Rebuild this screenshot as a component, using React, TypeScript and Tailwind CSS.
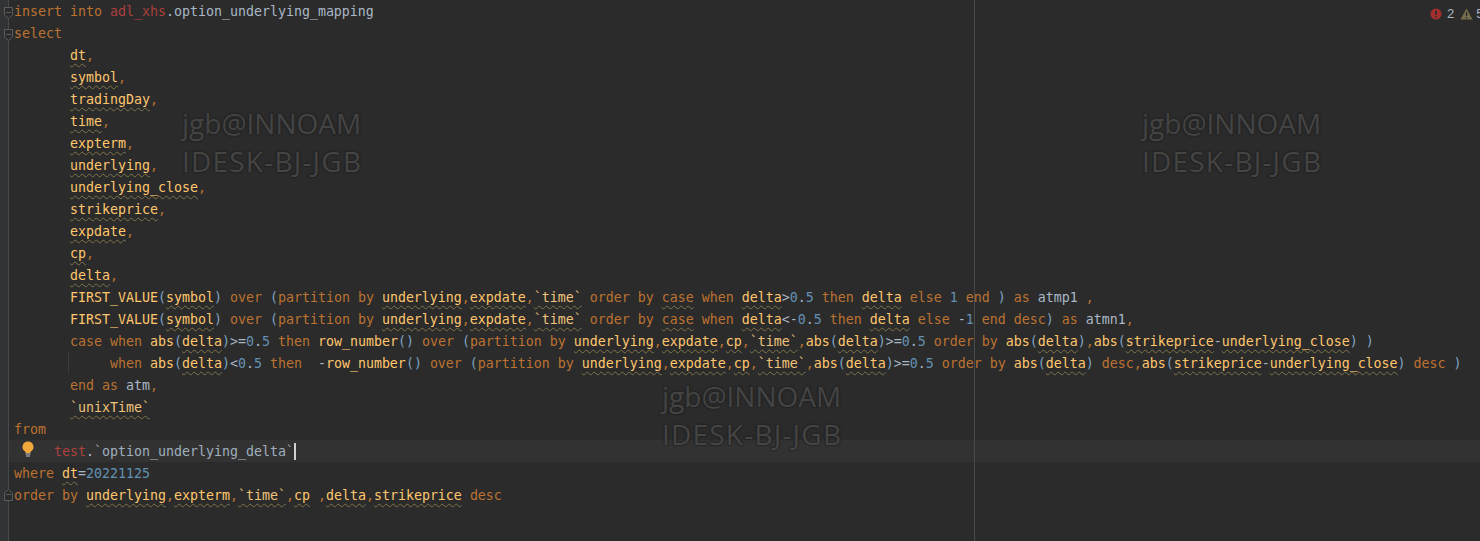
import React from 'react';

const keywords = new Set(['insert', 'into', 'select', 'over', 'partition', 'by', 'order', 'case', 'when', 'then', 'else', 'end', 'as', 'desc', 'from', 'where']);
const columns = new Set(['dt', 'symbol', 'tradingDay', 'time', 'expterm', 'underlying', 'underlying_close', 'strikeprice', 'expdate', 'cp', 'delta']);
const functions = new Set(['FIRST_VALUE', 'abs', 'row_number']);

const sourceLines = [
  'insert into adl_xhs.option_underlying_mapping',
  'select',
  '       dt,',
  '       symbol,',
  '       tradingDay,',
  '       time,',
  '       expterm,',
  '       underlying,',
  '       underlying_close,',
  '       strikeprice,',
  '       expdate,',
  '       cp,',
  '       delta,',
  '       FIRST_VALUE(symbol) over (partition by underlying,expdate,`time` order by ~case when delta>0.5 then delta else 1 end ) as atmp1 ,',
  '       FIRST_VALUE(symbol) over (partition by underlying,expdate,`time` order by ~case when delta<-0.5 then delta else -1 end desc) as atmn1,',
  '       case when abs(delta)>=0.5 then row_number() over (partition by underlying,expdate,cp,`time`,abs(delta)>=0.5 order by abs(delta),abs(strikeprice-underlying_close) )',
  '            when abs(delta)<0.5 then  -row_number() over (partition by underlying,expdate,cp,`time`,abs(delta)>=0.5 order by abs(delta) desc,abs(strikeprice-underlying_close) desc )',
  '       end as atm,',
  '       `unixTime`',
  'from',
  '     test.`option_underlying_delta`',
  'where dt=20221125',
  'order by underlying,expterm,`time`,cp ,delta,strikeprice desc',
];

const wavy = 'underline decoration-wavy decoration-[#7d7449] decoration-1 underline-offset-[3px]';

// small tokenizer, good enough for this one query
function Code({ text }: { text: string }) {
  const parts = text.match(/~case|`\w+`|\w+|\s+|./g) ?? [];
  return (
    <>
      {parts.map((part, i) => {
        if (part === '~case') return <span key={i} className={`text-[#bd7231] ${wavy}`}>case</span>;
        if (part === 'adl_xhs' || part === 'test') return <span key={i} className="text-[#ad3f3d]">{part}</span>;
        if (part === '`option_underlying_delta`') return <span key={i} className="text-[#a0aebd]">{part}</span>;
        if (part.startsWith('`')) return <span key={i} className={`text-[#f0c27a] ${wavy}`}>{part}</span>;
        if (keywords.has(part)) return <span key={i} className="text-[#bd7231]">{part}</span>;
        if (columns.has(part)) return <span key={i} className={`text-[#ffc66d] ${wavy}`}>{part}</span>;
        if (functions.has(part)) return <span key={i} className="text-[#ffc66d]">{part}</span>;
        if (/^\d/.test(part)) return <span key={i} className="text-[#6391b4]">{part}</span>;
        if (part === ',') return <span key={i} className="text-[#bd7231]">,</span>;
        if (part === '(' || part === ')') return <span key={i} className="text-[#7da3c4]">{part}</span>;
        return <span key={i} className="text-[#a9b7c6]">{part}</span>;
      })}
    </>
  );
}

function FoldMark({ top, up }: { top: number; up?: boolean }) {
  return (
    <svg className="absolute left-[4px]" style={{ top }} width="9" height="12" viewBox="0 0 9 12" fill="#2b2b2b" stroke="#5a5c5e">
      {up ? <path d="M.5 11.5V4L4.5.5 8.5 4v7.5z" /> : <path d="M.5.5h8V8l-4 3.5L.5 8z" />}
      <path d="M2 5.5h5" />
    </svg>
  );
}

function Watermark({ left, top }: { left: number; top: number }) {
  return (
    <div
      className="absolute pointer-events-none font-['Open_Sans',sans-serif] text-[28px] leading-[38px] whitespace-pre text-[#444444] [text-shadow:0_0_2px_#1f1f1f,0_0_2px_#1f1f1f]"
      style={{ left, top }}
    >
      <div>jgb@INNOAM</div>
      <div className="tracking-[1.2px]">IDESK-BJ-JGB</div>
    </div>
  );
}

export default function App() {
  return (
    <div className="relative h-[541px] w-[1480px] overflow-hidden bg-[#2b2b2b] flex">
      {/* gutter */}
      <div className="w-[9px] shrink-0 bg-[#313335] border-r border-[#47494b]" />

      {/* editor lines */}
      <div className="flex-1 font-['DejaVu_Sans_Mono',monospace] text-[13.29px]">
        {sourceLines.map((line, i) => (
          <div
            key={i}
            className={`h-[22px] leading-[24px] pl-[5px] whitespace-pre ${i === 20 ? 'bg-[#323232]' : ''}`}
          >
            <Code text={line} />
            {i === 20 && <span className="inline-block w-[2px] h-[17px] bg-[#d0d0d0] align-[-4px]" />}
          </div>
        ))}
      </div>

      {/* right margin */}
      <div className="absolute left-[974px] top-0 bottom-0 w-px bg-[#4a4a4a]" />

      {/* indent guide */}
      <div className="absolute left-[68px] top-[352px] h-[22px] w-px bg-[#3b3b3b]" />

      <FoldMark top={7} />
      <FoldMark top={29} />
      <FoldMark top={489} up />

      {/* bulb */}
      <svg className="absolute left-[21px] top-[441px]" width="14" height="16" viewBox="0 0 14 16">
        <path d="M7 0.5a5.4 5.4 0 0 0-3.2 9.8c.7.6.9 1 .9 1.7h4.6c0-.7.2-1.1.9-1.7A5.4 5.4 0 0 0 7 .5z" fill="#f2a93b" />
        <path d="M4.5 13h5M5 15h4" stroke="#c9c9c9" strokeWidth="1" />
      </svg>

      {/* inspection counters */}
      <div className="absolute left-[1430px] top-[7px] flex items-center font-['Liberation_Sans',sans-serif] text-[13px] leading-[14px] text-[#a9b7c6]">
        <svg width="12" height="12" viewBox="0 0 12 12">
          <circle cx="6" cy="6" r="5.5" fill="#a52f2f" />
          <path d="M6 2.5v4.2M6 8v1.6" stroke="#2b2b2b" strokeWidth="1.7" />
        </svg>
        <span className="ml-[5px]">2</span>
        <svg className="ml-[6px]" width="13" height="12" viewBox="0 0 13 12">
          <path d="M6.5.5l6 11H.5z" fill="#77704f" />
          <path d="M6.5 4v4M6.5 9v1.6" stroke="#2b2b2b" strokeWidth="1.4" />
        </svg>
        <span className="ml-[3px]">5</span>
      </div>

      <Watermark left={182} top={104} />
      <Watermark left={1142} top={104} />
      <Watermark left={662} top={377} />
    </div>
  );
}
